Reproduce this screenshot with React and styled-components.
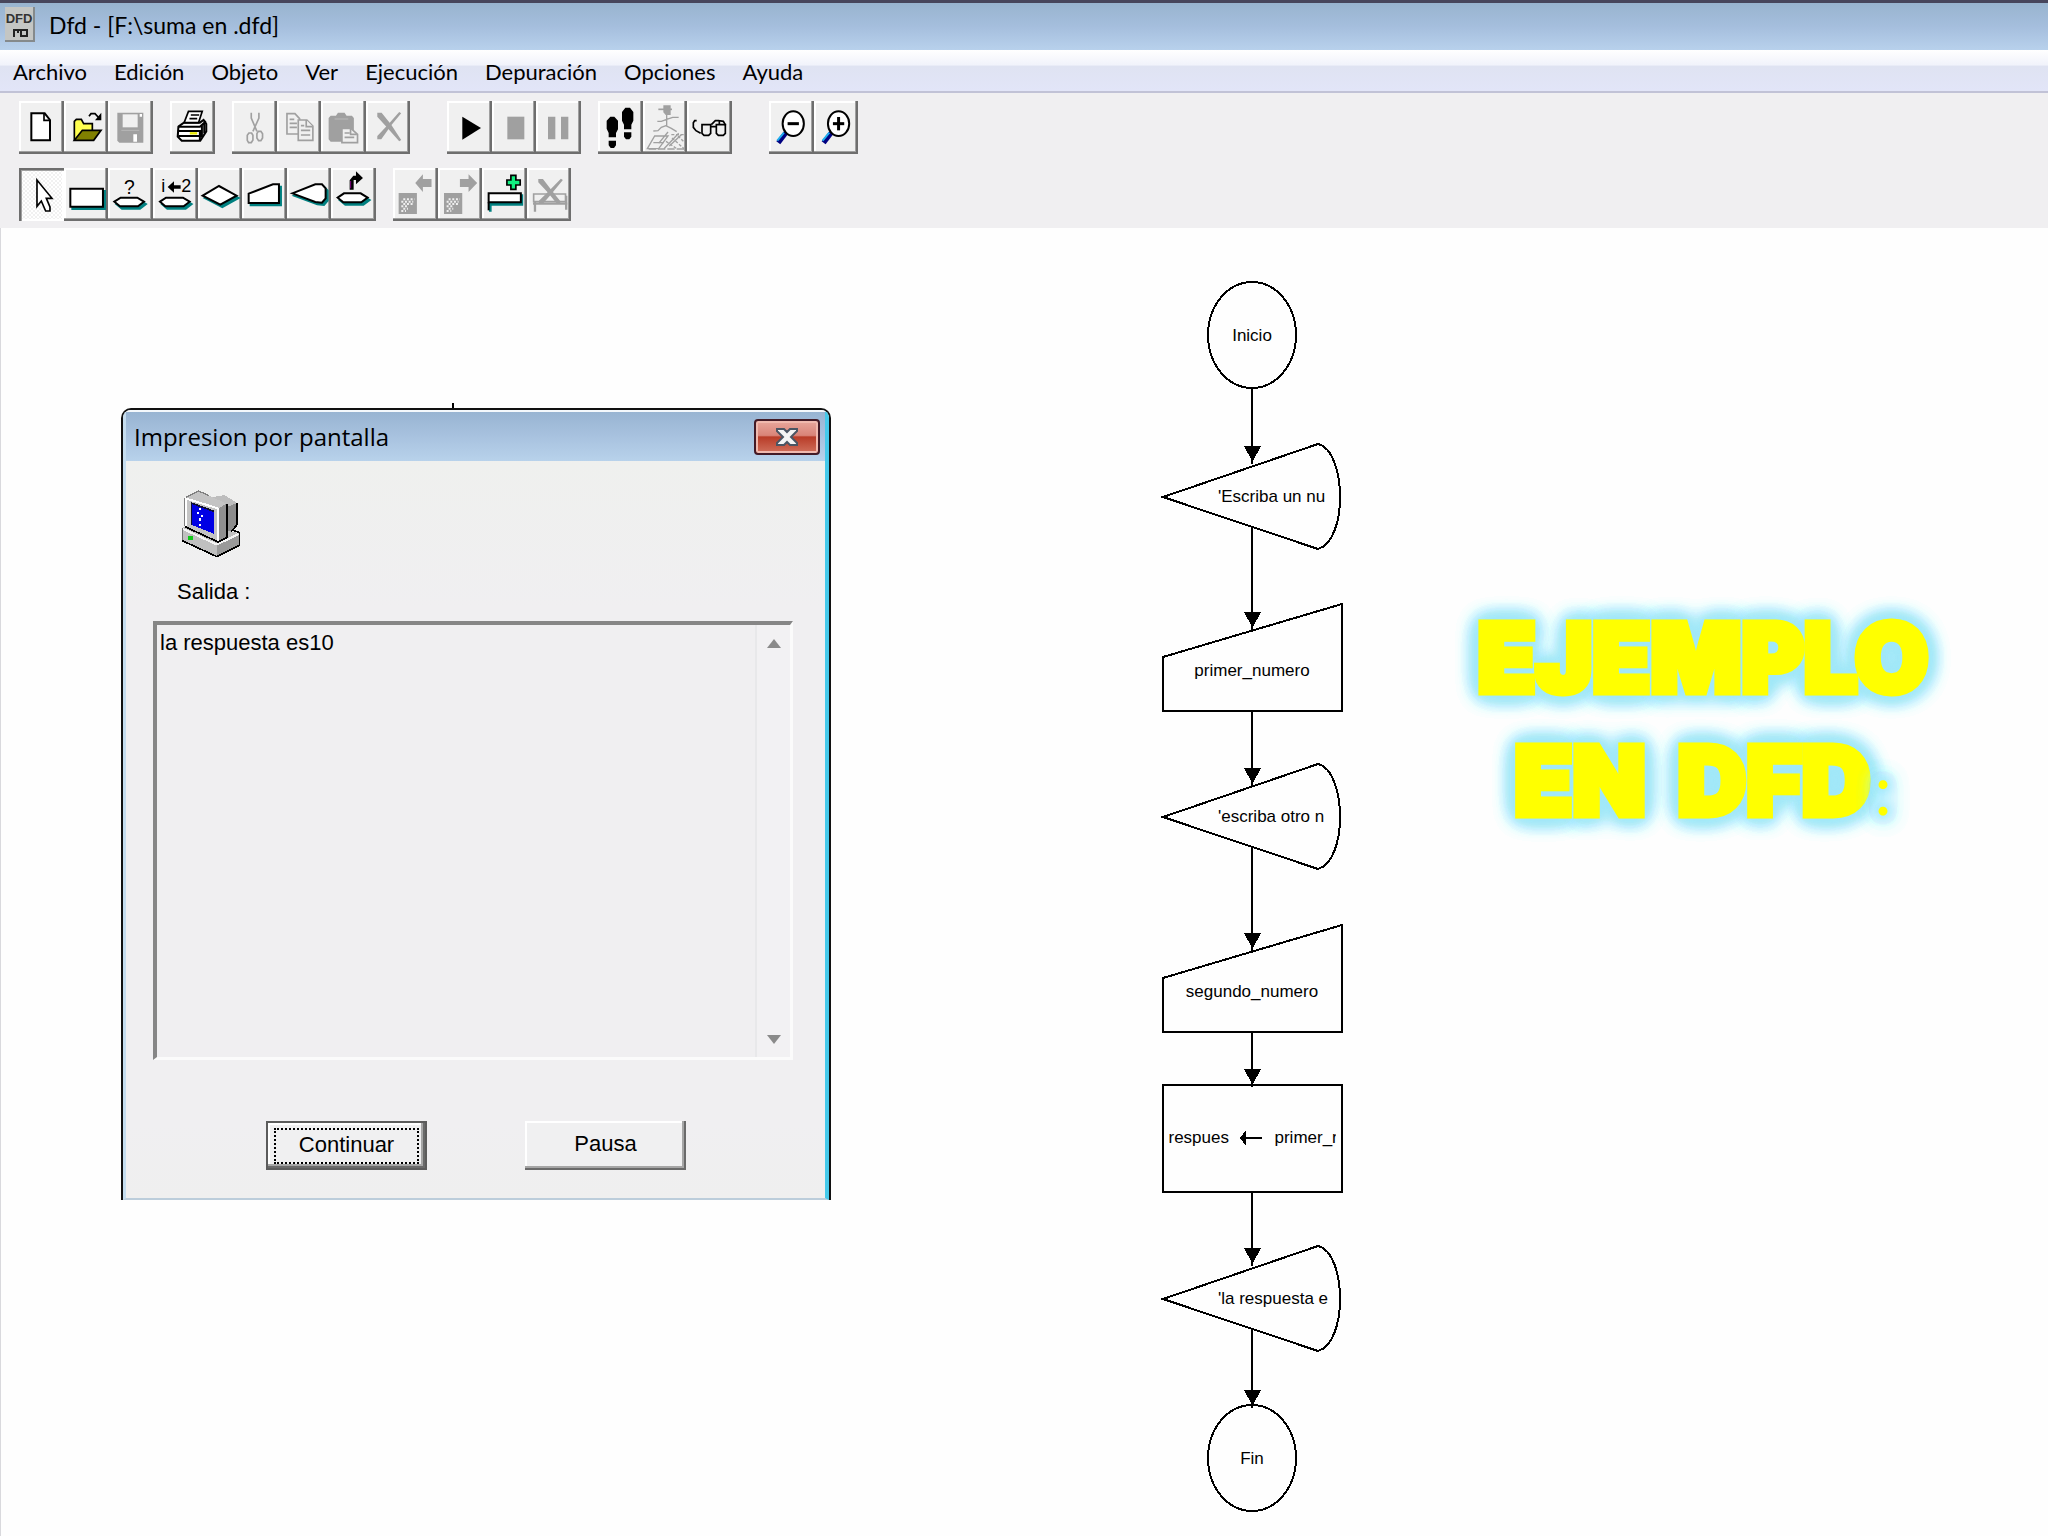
import { useState } from "react";
import styled, { createGlobalStyle, css } from "styled-components";

const GRAY = "#a0a0a0";
const TEAL = "#008080";
const FACE = "#f0f0f0";

const menus = ["Archivo", "Edición", "Objeto", "Ver", "Ejecución", "Depuración", "Opciones", "Ayuda"];

/* ---------- toolbar icons, one 134x159 tile for each button ---------- */

const Glyph = ({ at, children }) => (
  <svg viewBox={`${at} 134 159`} preserveAspectRatio="none" strokeLinejoin="miter" aria-hidden="true">
    {children}
  </svg>
);

// white shape with black outline and the teal shadow that DFD uses for its objects
const Raised = ({ points }) => (
  <>
    <polygon points={points} fill={TEAL} stroke={TEAL} strokeWidth="6" transform="translate(6 7)" />
    <polygon points={points} fill="#fff" stroke="#000" strokeWidth="6" />
  </>
);

const NewIcon = () => (
  <Glyph at="57 303">
    <path d="M94 340H134L150 360V421H94Z" fill="#fff" stroke="#000" strokeWidth="6" />
    <path d="M132 340V361H150" fill="none" stroke="#000" strokeWidth="5" />
  </Glyph>
);

const OpenIcon = () => (
  <Glyph at="191 303">
    <path d="M222 421V364L228 358H243L250 371H276V392" fill="#ffff50" stroke="#000" strokeWidth="5" />
    <path d="M222 421L246 391H302L280 421Z" fill="#808000" stroke="#000" strokeWidth="5" />
    <path d="M266 349L272 341H284L296 354" fill="none" stroke="#000" strokeWidth="5" />
    <path d="M303 338V361H284Z" />
  </Glyph>
);

const SaveIcon = () => (
  <Glyph at="326 303">
    <path d="M354 338H432V428H360L354 422Z" fill={GRAY} />
    <path d="M370 343H415V382H370Z" fill={FACE} />
    <path d="M421 342H428V350H421ZM402 403H413V425H402Z" fill="#fff" />
    <path d="M366 391H420" stroke="#b8b8b8" strokeWidth="3" />
  </Glyph>
);

const PrintIcon = () => (
  <Glyph at="511 303">
    <path d="M536 380L552 368H600L611 360L619 372V394L601 422H546L534 410Z" fill="#fff" stroke="#000" strokeWidth="6" />
    <path d="M566 334H607L596 368H553Z" fill="#fff" stroke="#000" strokeWidth="5" />
    <path d="M573 345H598M569 356H592" stroke="#000" strokeWidth="5" />
    <path d="M536 380H600L618 364M534 393H600V420M536 408H600M606 374V412M613 368V400" fill="none" stroke="#000" strokeWidth="6" />
    <path d="M570 400H592" stroke="#e8e800" strokeWidth="7" />
  </Glyph>
);

const CutIcon = () => (
  <Glyph at="694 303">
    <g fill="none" stroke={GRAY} strokeWidth="5">
      <path d="M752 338V354L769 394M775 338V354L757 394" />
      <path d="M745 399H753L757 406V420L752 428H744L740 421V406Z" />
      <path d="M773 394H781L786 401V414L781 422H774L769 414V401Z" />
    </g>
  </Glyph>
);

const CopyIcon = () => (
  <Glyph at="828 303">
    <g fill={FACE} stroke={GRAY} strokeWidth="5">
      <path d="M858 341H882L896 356V402H858Z" />
      <path d="M866 358H880M866 370H888M866 382H888" />
      <path d="M892 360H918L936 378V421H892Z" />
      <path d="M916 360V380H936M900 377H910M900 391H928M900 405H928" />
    </g>
  </Glyph>
);

const PasteIcon = () => (
  <Glyph at="962 303">
    <path d="M985 354L991 347H1007L1013 338H1033L1039 347H1055L1061 354V425H991L985 418Z" fill={GRAY} />
    <path d="M1003 357H1044" stroke="#b4b4b4" strokeWidth="4" />
    <path d="M1025 385H1052L1072 403V428H1025Z" fill={FACE} stroke={GRAY} strokeWidth="5" />
    <path d="M1033 399H1048M1033 412H1062M1051 386V403H1070" fill="none" stroke={GRAY} strokeWidth="5" />
  </Glyph>
);

const DeleteIcon = () => (
  <Glyph at="1096 303">
    <path d="M1130 338H1143L1172 374L1202 420L1196 424L1160 383L1130 350Z" fill={GRAY} />
    <path d="M1196 336L1202 340L1172 376L1142 418H1130V408L1162 374Z" fill={GRAY} />
  </Glyph>
);

const RunIcon = () => (
  <Glyph at="51 303">
    <path d="M97 350V419L153 384Z" />
  </Glyph>
);

const StopIcon = () => (
  <Glyph at="185 303">
    <path d="M231 350H282V418H231Z" fill={GRAY} />
  </Glyph>
);

const PauseIcon = () => (
  <Glyph at="318 303">
    <path d="M354 350H376V418H354ZM393 350H415V418H393Z" fill={GRAY} />
  </Glyph>
);

const StepsIcon = () => (
  <Glyph at="504 303">
    <path d="M541 350H553L564 362V388L558 399V412H536V399L530 386V362ZM536 422H558V436L552 444H542L536 436Z" />
    <path d="M586 323H600L610 336V362L604 374V388H582V374L576 362V336ZM582 397H604V410L598 418H588L582 410Z" />
  </Glyph>
);

const WalkIcon = () => (
  <Glyph at="637 303">
    <g fill="none" stroke={GRAY} strokeWidth="4">
      <path d="M700 318H718V343H706L700 336Z" fill={GRAY} />
      <path d="M683 328H724" strokeWidth="5" />
      <path d="M708 343V378L722 385L738 395M708 376L692 382L682 392L668 393M680 364H692L708 358L726 352H744" />
      <path d="M650 446L672 408H712L684 446ZM668 428H700M684 430L712 396M700 446L744 400M716 438L752 404" />
      <path d="M722 404H760M706 424L738 446M724 414L762 448M742 408L758 424" strokeDasharray="9 5" />
      <path d="M654 447H764" strokeDasharray="22 6" />
    </g>
  </Glyph>
);

const WatchIcon = () => (
  <Glyph at="771 303">
    <g fill="none" stroke="#000" strokeWidth="5">
      <path d="M800 362H794L790 368V382L798 392L812 400" />
      <path d="M816 374H842V400L836 406H822L816 400ZM859 374H886V400L880 406H865L859 400Z" />
      <path d="M842 380H859M844 374L856 362H868M868 374V362L880 364L887 376" />
    </g>
  </Glyph>
);

const Lens = ({ x }) => (
  <>
    <path d={`M${x - 22} 398L${x - 45} 428`} stroke="#000080" strokeWidth="15" />
    <path d={`M${x - 28} 398L${x - 48} 422`} stroke="#20b0f0" strokeWidth="6" />
    <ellipse cx={x} cy="371" rx="32" ry="37" fill="#fff" stroke="#000" strokeWidth="6" />
    <path d={`M${x - 17} 371H${x + 17}`} stroke="#000" strokeWidth="9" />
  </>
);

const ZoomOutIcon = () => (
  <Glyph at="1017 303">
    <Lens x={1090} />
  </Glyph>
);

const ZoomInIcon = () => (
  <Glyph at="1151 303">
    <Lens x={1225} />
    <path d="M1225 351V391" stroke="#000" strokeWidth="9" />
  </Glyph>
);

const PointerIcon = () => (
  <Glyph at="57 505">
    <path d="M111 541V620L124 604L137 634H150V622L139 596H156Z" fill="#fff" stroke="#000" strokeWidth="5" />
  </Glyph>
);

const ProcessIcon = () => (
  <Glyph at="191 505">
    <Raised points="210,567 308,567 308,621 210,621" />
  </Glyph>
);

const ReadIcon = () => (
  <Glyph at="326 505">
    <text x="390" y="583" fontSize="58" textAnchor="middle">?</text>
    <Raised points="345,606 364,594 414,594 434,606 416,620 362,620" />
  </Glyph>
);

const AssignIcon = () => (
  <Glyph at="459 505">
    <text x="484" y="578" fontSize="54">i</text>
    <text x="544" y="578" fontSize="54">2</text>
    <path d="M503 562L522 545V557H542V567H522V579Z" />
    <Raised points="480,606 498,594 549,594 569,606 551,620 496,620" />
  </Glyph>
);

const DecisionIcon = () => (
  <Glyph at="593 505">
    <Raised points="607,588 656,559 709,588 660,615" />
  </Glyph>
);

const InputIcon = () => (
  <Glyph at="727 505">
    <Raised points="747,610 747,582 820,554 838,554 838,610" />
  </Glyph>
);

const OutputIcon = () => (
  <Glyph at="860 505">
    <Raised points="876,581 945,554 965,554 976,566 976,596 965,609 945,607" />
  </Glyph>
);

const SubprogramIcon = () => (
  <Glyph at="995 505">
    <path d="M1051 570V542L1062 528H1070V515L1091 535L1070 554V541H1063V570Z" />
    <path d="M1054 566V544" stroke="#800080" strokeWidth="3" />
    <Raised points="1015,594 1034,581 1084,581 1105,594 1086,608 1032,608" />
  </Glyph>
);

const Checker = ({ x }) => (
  <>
    <path d={`M${x} 580h55v63h-55z`} fill={GRAY} />
    <path
      d={`M${x + 14} 599h34M${x + 8} 606h36M${x + 14} 613h28M${x + 8} 620h20M${x + 14} 627h14M${x + 8} 634h14`}
      stroke={FACE}
      strokeWidth="6"
      strokeDasharray="6 5"
    />
  </>
);

const PrevIcon = () => (
  <Glyph at="-110 505">
    <Checker x={-93} />
    <path d="M-43 550L-20 524V538H6V562H-20V577Z" fill={GRAY} />
  </Glyph>
);

const NextIcon = () => (
  <Glyph at="24 505">
    <Checker x={42} />
    <path d="M142 550L116 524V538H90V562H116V577Z" fill={GRAY} />
  </Glyph>
);

const AddIcon = () => (
  <Glyph at="158 505">
    <path d="M183 636V614H278V584" fill="none" stroke={TEAL} strokeWidth="8" />
    <path d="M178 581H275V608H178Z" fill="#fff" stroke="#000" strokeWidth="6" />
    <path d="M178 608V632" stroke="#000" strokeWidth="6" />
    <path d="M245 527H260V541H273V556H260V569H245V556H233V541H245Z" fill="#10f080" stroke="#000" strokeWidth="5" />
  </Glyph>
);

const RemoveIcon = () => (
  <Glyph at="292 505">
    <path d="M312 583H408V606H312Z" fill={FACE} stroke={GRAY} strokeWidth="5" />
    <path d="M310 612H414M316 606V636M410 588V630" stroke={GRAY} strokeWidth="7" />
    <path d="M326 538H340L366 572L392 604V612H382L354 578L326 548Z" fill={GRAY} />
    <path d="M394 537L400 541L366 582L340 612H328V603L358 574Z" fill={GRAY} />
  </Glyph>
);

const fileTools = [
  { width: 134, items: [["Nuevo", NewIcon], ["Abrir", OpenIcon], ["Guardar", SaveIcon, true]] },
  { width: 45, items: [["Imprimir", PrintIcon]] },
  {
    width: 178,
    items: [["Cortar", CutIcon, true], ["Copiar", CopyIcon, true], ["Pegar", PasteIcon, true], ["Eliminar", DeleteIcon, true]],
  },
  { width: 134, apart: true, items: [["Ejecutar", RunIcon], ["Detener", StopIcon, true], ["Pausar", PauseIcon, true]] },
  { width: 134, items: [["Paso simple", StepsIcon], ["Ejecutar hasta", WalkIcon, true], ["Evaluador", WatchIcon]] },
  { width: 89, apart: true, items: [["Alejar", ZoomOutIcon], ["Acercar", ZoomInIcon]] },
];

const objectTools = [
  {
    width: 357,
    items: [
      ["Cursor", PointerIcon],
      ["Proceso", ProcessIcon],
      ["Leer", ReadIcon],
      ["Asignación", AssignIcon],
      ["Decisión", DecisionIcon],
      ["Lectura", InputIcon],
      ["Salida", OutputIcon],
      ["Llamada", SubprogramIcon],
    ],
  },
  {
    width: 178,
    items: [
      ["Subprograma anterior", PrevIcon, true],
      ["Subprograma siguiente", NextIcon, true],
      ["Nuevo subprograma", AddIcon],
      ["Eliminar subprograma", RemoveIcon, true],
    ],
  },
];

/* ---------- flow chart ---------- */

// exit is the y (inside the node) where the outgoing line starts
const shapes = {
  terminal: {
    exit: 106,
    draw: <ellipse cx="90" cy="53" rx="44" ry="53" />,
  },
  output: {
    exit: 84,
    draw: <path d="M1 54L156 1C170 4 178 28 178 54S170 102 156 106Z" />,
  },
  input: {
    exit: 108,
    draw: <path d="M1 54L180 1V108H1Z" />,
  },
  process: {
    exit: 108,
    draw: <path d="M1 1H180V108H1Z" />,
  },
};

// arrow is the y (inside the node) where the incoming arrow ends
const nodes = [
  { top: 54, shape: "terminal", text: "Inicio" },
  { top: 215, shape: "output", text: "'Escriba un nu", arrow: 21 },
  { top: 375, shape: "input", text: "primer_numero", arrow: 27 },
  { top: 535, shape: "output", text: "'escriba otro n", arrow: 23 },
  { top: 696, shape: "input", text: "segundo_numero", arrow: 27 },
  { top: 856, shape: "process", left: "respues", right: "primer_n", arrow: 3 },
  { top: 1017, shape: "output", text: "'la respuesta e", arrow: 21 },
  { top: 1177, shape: "terminal", text: "Fin", arrow: 3 },
];

const FlowNode = ({ node, previous }) => {
  const { draw } = shapes[node.shape];
  const lineStart = previous ? previous.top + shapes[previous.shape].exit - node.top : 0;

  return (
    <Node style={{ top: node.top }}>
      <Shape viewBox="0 0 180 109" shapeRendering="crispEdges" aria-hidden="true">
        {draw}
        {previous && (
          <>
            <path d={`M90 ${lineStart}V${node.arrow}`} />
            <path d={`M82 ${node.arrow - 18}H99L90.5 ${node.arrow - 2}Z`} fill="#000" stroke="none" />
          </>
        )}
        {node.shape === "process" && <path d="M78 54L84 46V53H100V55H84V62Z" fill="#000" stroke="none" />}
      </Shape>
      {node.shape === "process" ? (
        <Assignment>
          <Clipped>{node.left}</Clipped>
          <Clipped>{node.right}</Clipped>
        </Assignment>
      ) : (
        <Label $shape={node.shape}>{node.text}</Label>
      )}
    </Node>
  );
};

const ComputerIcon = () => (
  <ComputerSvg viewBox="215 296 180 206" preserveAspectRatio="none" shapeRendering="crispEdges" aria-hidden="true">
    <path d="M300 322L345 314L384 338V404L352 440L320 420Z" fill="#8c8c8c" />
    <path d="M300 322L345 314L384 338L352 350Z" fill="#bdbdbd" />
    <path d="M382 338V404L352 440" fill="none" stroke="#000" strokeWidth="5" />
    <path d="M218 412L250 400L390 428V464L323 498L218 450Z" fill="#c0c0c0" />
    <path d="M323 462L390 428V464L323 498Z" fill="#9a9a9a" />
    <path d="M218 414L323 462L388 430" fill="none" stroke="#f4f4f4" strokeWidth="6" />
    <path d="M218 450L323 498L390 464V426L372 420" fill="none" stroke="#000" strokeWidth="5" />
    <path d="M219 448V412" stroke="#707070" strokeWidth="4" />
    <path d="M226 322L268 302L352 340V440L326 452L226 408Z" fill="#c4c4c4" />
    <path d="M326 354L352 340V440L326 452Z" fill="#909090" />
    <path d="M226 322L268 302L300 316" fill="none" stroke="#808080" strokeWidth="4" />
    <path d="M229 406V324L326 354V450" fill="none" stroke="#fff" strokeWidth="6" />
    <path d="M226 408L326 454L352 441V340" fill="none" stroke="#000" strokeWidth="5" />
    <path d="M226 322V406" stroke="#808080" strokeWidth="3" />
    <path d="M244 336L315 362V430L244 402Z" fill="#0000e4" />
    <path d="M246 402V338L315 363" fill="none" stroke="#101030" strokeWidth="5" />
    <path d="M262 366h7v6h-7zM268 354h8v6h-8zM274 374h8v6h-8zM268 384h8v7h-8zM268 400h8v6h-8z" fill="#fff" />
    <path d="M236 436h15v13h-15z" fill="#10c818" />
  </ComputerSvg>
);

const Toolbar = ({ groups, selected, onSelect }) => (
  <ToolRow>
    {groups.map((group) => (
      <ToolGroup key={group.items[0][0]} $width={group.width} $apart={group.apart}>
        {group.items.map(([name, Icon, disabled]) => (
          <ToolButton
            key={name}
            type="button"
            aria-label={name}
            disabled={disabled}
            $pressed={selected === name}
            onClick={() => onSelect && onSelect(name)}
          >
            <Icon />
          </ToolButton>
        ))}
      </ToolGroup>
    ))}
  </ToolRow>
);

const App = () => {
  const [tool, setTool] = useState("Cursor");

  return (
    <Window>
      <GlobalStyle />
      <TitleBar>
        <AppIcon viewBox="0 0 30 35" aria-hidden="true">
          <rect width="30" height="35" fill="#c4c6c4" />
          <path d="M29 0V34H0" fill="none" stroke="#858a8c" strokeWidth="2" />
          <text x="14" y="16" fontSize="13" fontWeight="bold" textAnchor="middle" fill="#333">DFD</text>
          <path d="M9 30V23H13V26M16 30V23H22V29H16M9 23H16" fill="none" stroke="#222" strokeWidth="2" />
        </AppIcon>
        <Title>Dfd - [F:\suma en .dfd]</Title>
      </TitleBar>
      <MenuBar>
        {menus.map((name) => (
          <MenuButton key={name} type="button">
            {name}
          </MenuButton>
        ))}
      </MenuBar>
      <Tools>
        <Toolbar groups={fileTools} />
        <Toolbar groups={objectTools} selected={tool} onSelect={setTool} />
      </Tools>
      <Canvas>
        <LineStub />
        <Dialog role="dialog" aria-labelledby="dialog-title">
          <Frame>
            <DialogBar>
              <DialogTitle id="dialog-title">Impresion por pantalla</DialogTitle>
              <CloseButton type="button" aria-label="Cerrar">
                <svg width="24" height="20" viewBox="0 0 24 20" aria-hidden="true">
                  <path
                    d="M2 2H9L12 5L15 2H22V4L16 10L22 16V18H15L12 15L9 18H2V16L8 10L2 4Z"
                    fill="#f4f4f4"
                    stroke="#4b5563"
                    strokeWidth="2"
                  />
                </svg>
              </CloseButton>
            </DialogBar>
            <DialogBody>
              <ComputerIcon />
              <OutputLabel htmlFor="salida">Salida :</OutputLabel>
              <OutputBox>
                <OutputText id="salida" readOnly value="la respuesta es10" />
                <ScrollBar>
                  <ScrollButton type="button" aria-label="Subir">
                    <svg width="14" height="9" viewBox="0 0 14 9" aria-hidden="true">
                      <path d="M7 0L14 9H0Z" fill="#8a8a8a" />
                    </svg>
                  </ScrollButton>
                  <ScrollButton type="button" aria-label="Bajar">
                    <svg width="14" height="9" viewBox="0 0 14 9" aria-hidden="true">
                      <path d="M7 9L14 0H0Z" fill="#8a8a8a" />
                    </svg>
                  </ScrollButton>
                </ScrollBar>
              </OutputBox>
              <Actions>
                <ActionButton type="button" $default>
                  <FocusRing>Continuar</FocusRing>
                </ActionButton>
                <ActionButton type="button">Pausa</ActionButton>
              </Actions>
            </DialogBody>
          </Frame>
        </Dialog>
        <Diagram>
          {nodes.map((node, i) => (
            <FlowNode key={node.top} node={node} previous={nodes[i - 1]} />
          ))}
        </Diagram>
        <Banner>
          <BannerLine>EJEMPLO</BannerLine>
          <BannerLine>
            <span>EN</span> <span>DFD</span>
            <Colon>:</Colon>
          </BannerLine>
        </Banner>
      </Canvas>
    </Window>
  );
};

// Styled Components
const GlobalStyle = createGlobalStyle`
  * {
    box-sizing: border-box;
  }

  body {
    margin: 0;
    background: #fefefe;
    color: #000;
    font-family: "Liberation Sans", Arial, sans-serif;
  }

  button, textarea {
    font-family: inherit;
    color: inherit;
  }
`;

const Window = styled.div`
  display: flex;
  flex-direction: column;
  min-height: 100vh;
`;

const TitleBar = styled.header`
  display: flex;
  align-items: center;
  gap: 14px;
  height: 50px;
  padding: 0 5px 4px;
  border-top: 3px solid #47465c;
  background: linear-gradient(#98b4cf, #a5bedd 50%, #b8d1ec);
`;

const AppIcon = styled.svg`
  width: 30px;
  height: 35px;
`;

const Title = styled.h1`
  margin: 0;
  font-family: Lato, sans-serif;
  font-size: 23px;
  font-weight: 400;
  line-height: 28px;
`;

const MenuBar = styled.nav`
  display: flex;
  align-items: center;
  gap: 27px;
  height: 43px;
  padding: 2px 13px 0;
  border-bottom: 2px solid #c1c2d6;
  background: linear-gradient(#fff, #f1f3fb 36%, #dfe3f2 40%, #e2e5f8);
`;

const MenuButton = styled.button`
  padding: 0;
  border: 0;
  background: none;
  font-family: Lato, sans-serif;
  font-size: 22px;
  line-height: 28px;
`;

const Tools = styled.div`
  display: flex;
  flex-direction: column;
  gap: 14px;
  padding: 8px 19px 7px;
  background: #f0eff1;
`;

const ToolRow = styled.div`
  display: flex;
  gap: 17px;
`;

const ToolGroup = styled.div`
  display: flex;
  width: ${(props) => props.$width}px;
  margin-left: ${(props) => (props.$apart ? "20px" : "0")};
`;

const ToolButton = styled.button`
  flex: 1;
  min-width: 0;
  height: 53px;
  padding: 0;
  border: 0;
  background: #f0f0f0;
  box-shadow: inset -2px -2px #6e6e6e, inset -3px -3px #a0a0a0, inset 2px 2px #fff;

  ${(props) =>
    props.$pressed &&
    css`
      background: repeating-conic-gradient(#fff 0 25%, #f1f1f1 0 50%) 0 0 / 4px 4px;
      box-shadow: inset 2px 2px #6e6e6e, inset 3px 3px #a0a0a0, inset -2px -2px #fff;
    `}

  svg {
    display: block;
    width: 100%;
    height: 100%;
  }
`;

const Canvas = styled.main`
  position: relative;
  flex: 1;
  min-height: 1308px;
  border-left: 1px solid #d9d9dd;
  overflow: hidden;
`;

const LineStub = styled.div`
  position: absolute;
  top: 175px;
  left: 451px;
  width: 2px;
  height: 6px;
  background: #000;
`;

const Dialog = styled.section`
  position: absolute;
  top: 180px;
  left: 120px;
  width: 710px;
  border: 2px solid #111;
  border-bottom: 0;
  border-radius: 10px 10px 0 0;
  overflow: hidden;
`;

const Frame = styled.div`
  border: solid;
  border-width: 2px 4px 2px 3px;
  border-color: #f4f8fc #45c9ea #bccddb #c5ddef;
`;

const DialogBar = styled.header`
  display: flex;
  justify-content: space-between;
  align-items: center;
  height: 49px;
  padding: 0 5px 0 8px;
  background: linear-gradient(#98b4d2, #a8c2df 50%, #b8d2eb);
`;

const DialogTitle = styled.h2`
  margin: 0;
  font-family: "Open Sans", "Noto Sans", sans-serif;
  font-size: 24px;
  font-weight: 400;
  line-height: 28px;
`;

const CloseButton = styled.button`
  display: flex;
  justify-content: center;
  align-items: center;
  width: 66px;
  height: 36px;
  padding: 0;
  border: 2px solid #431a26;
  border-radius: 4px;
  background: linear-gradient(#e8a79c, #d98478 45%, #b83c28 50%, #d0705c);
  box-shadow: inset 0 0 0 2px #f0b9ae;
`;

const DialogBody = styled.div`
  display: flex;
  flex-direction: column;
  align-items: flex-start;
  padding: 28px 32px 28px 27px;
  background: linear-gradient(#eff0ee, #f0eff1 20%, #f0eff1 90%, #efefef);
`;

const ComputerSvg = styled.svg`
  width: 60px;
  height: 69px;
  margin-left: 28px;
`;

const OutputLabel = styled.label`
  margin: 20px 24px 15px;
  font-size: 22px;
  line-height: 28px;
`;

const OutputBox = styled.div`
  display: flex;
  align-self: stretch;
  height: 439px;
  border: solid;
  border-width: 4px 3px 3px 4px;
  border-color: #868686 #fbfbfb #fbfbfb #868686;
`;

const OutputText = styled.textarea`
  flex: 1;
  min-width: 0;
  padding: 4px 3px;
  border: 0;
  outline: 0;
  resize: none;
  overflow: hidden;
  background: transparent;
  font-size: 22px;
  line-height: 28px;
`;

const ScrollBar = styled.div`
  display: flex;
  flex-direction: column;
  justify-content: space-between;
  width: 35px;
  border-left: 2px solid #e8e8ea;
  background: #f2f1f3;
`;

const ScrollButton = styled.button`
  display: flex;
  justify-content: center;
  align-items: center;
  height: 36px;
  padding: 0;
  border: 0;
  background: none;
`;

const Actions = styled.div`
  display: flex;
  gap: 98px;
  margin: 61px 0 0 113px;
`;

const ActionButton = styled.button`
  display: flex;
  justify-content: center;
  align-items: center;
  width: 161px;
  height: 49px;
  padding: 0 0 3px;
  border: 0;
  background: #f0f0f1;
  box-shadow: inset -2px -2px #6a6a6a, inset -4px -4px #a6a6a6, inset 2px 2px #fff;
  font-size: 22px;
  line-height: 28px;

  ${(props) =>
    props.$default &&
    css`
      padding: 0;
      box-shadow: inset 0 0 0 2px #5c5c5c, inset -4px -4px #6a6a6a, inset -6px -6px #a6a6a6, inset 4px 4px #fff;
    `}
`;

const FocusRing = styled.span`
  width: 145px;
  padding: 1px 0 3px;
  border: 2px dotted #000;
`;

const Diagram = styled.div`
  position: absolute;
  top: 0;
  left: 1161px;
  width: 180px;
`;

const Node = styled.div`
  position: absolute;
  left: 0;
  display: flex;
  justify-content: center;
  align-items: center;
  width: 180px;
  height: 107px;
  font-size: 17px;
  line-height: 20px;
`;

const Shape = styled.svg`
  position: absolute;
  top: 0;
  left: 0;
  width: 180px;
  height: 109px;
  overflow: visible;
  fill: none;
  stroke: #000;
  stroke-width: 2px;
`;

const Label = styled.span`
  white-space: nowrap;

  ${(props) =>
    props.$shape === "input" &&
    css`
      padding-top: 28px;
    `}

  ${(props) =>
    props.$shape === "output" &&
    css`
      width: 112px;
      margin-left: 44px;
    `}
`;

const Assignment = styled.div`
  display: flex;
  gap: 45px;
`;

const Clipped = styled.span`
  width: 61px;
  overflow: hidden;
  white-space: nowrap;
`;

const Banner = styled.p`
  position: absolute;
  top: 368px;
  left: 1440px;
  display: flex;
  flex-direction: column;
  align-items: center;
  width: 524px;
  margin: 0;
  color: #ff0;
  font-family: Inter, sans-serif;
  font-size: 95px;
  font-weight: 900;
  line-height: 123px;
  white-space: nowrap;
  -webkit-text-stroke: 7px #ff0;
  text-shadow: 0 0 10px #a2e8f8, 0 0 12px #a2e8f8, 0 0 14px #a2e8f8, 0 0 16px #a2e8f8, 0 0 18px #a2e8f8,
    0 0 20px #a2e8f8, 0 0 22px #a2e8f8, 0 0 22px #a2e8f8, 0 0 24px #a2e8f8, 0 0 24px #a2e8f8, 0 0 24px #a2e8f8,
    0 0 24px #a2e8f8;
`;

const BannerLine = styled.span`
  display: flex;
  align-items: baseline;
  gap: 32px;
`;

const Colon = styled.span`
  margin-left: -28px;
  font-family: Lato, sans-serif;
  font-size: 70px;
  font-weight: 400;
  -webkit-text-stroke: 0;
`;

export default App;
